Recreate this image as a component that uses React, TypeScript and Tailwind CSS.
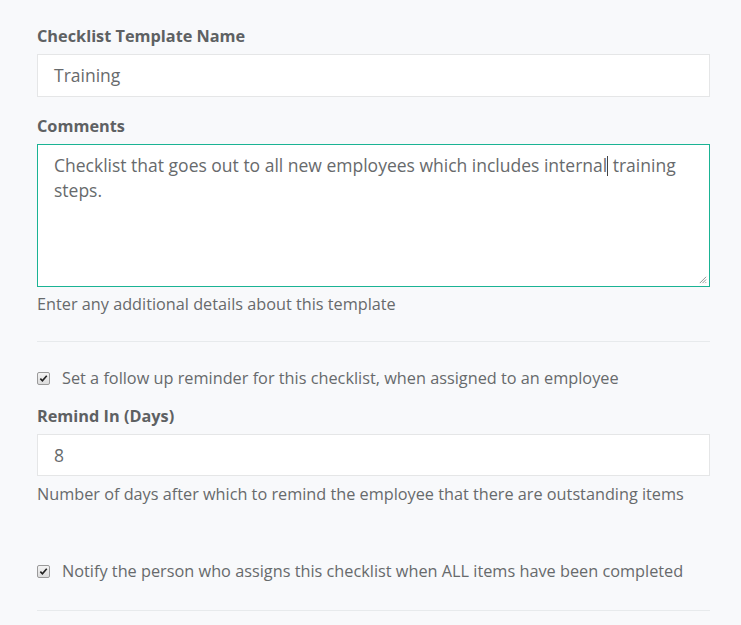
function Check({ label }: { label: string }) {
  return (
    <label className="flex h-5 items-center gap-3">
      <span className="flex h-[13px] w-[13px] items-center justify-center rounded-[2px] border border-[#9a9a9a] bg-gradient-to-b from-[#f4f4f4] to-[#dcdcdc]">
        <svg viewBox="0 0 10 10" className="h-[9px] w-[9px]">
          <path d="M1.5 5.2 L3.8 7.6 L8.6 2" fill="none" stroke="#222" strokeWidth="1.8" />
        </svg>
      </span>
      <span className="text-[16.3px] text-[#676a6c]">{label}</span>
    </label>
  );
}

export default function App() {
  return (
    <div className="min-h-[625px] bg-[#f8f9fb] px-[37px] font-['Open_Sans',sans-serif] text-[#676a6c]">
      <div className="w-[673px] pt-[26px]">
        <div className="text-[16.3px] font-bold leading-5 text-[#5e6163]">Checklist Template Name</div>
        <div className="mt-2 flex h-[43px] items-center border border-[#e5e6e7] bg-white px-4 text-[17.5px]">
          Training
        </div>

        <div className="mt-[19px] text-[16.3px] font-bold leading-5 text-[#5e6163]">Comments</div>
        <div className="relative mt-2 h-[143px] border border-[#1ab394] bg-white px-4 pt-2 text-[17.5px] leading-[25px]">
          Checklist that goes out to all new employees which includes internal
          <span className="inline-block h-[20px] w-px bg-[#444] align-[-4px]" /> training steps.
          <svg viewBox="0 0 10 10" className="absolute bottom-[2px] right-[2px] h-[9px] w-[9px]">
            <path d="M9 2 L2 9 M9 5 L5 9 M9 8 L8 9" stroke="#888" strokeWidth="1" />
          </svg>
        </div>
        <div className="mt-[7px] text-[16.25px] leading-5">Enter any additional details about this template</div>

        <div className="mt-[27px] h-px bg-[#e7eaec]" />

        <div className="mt-[26px]">
          <Check label="Set a follow up reminder for this checklist, when assigned to an employee" />
        </div>

        <div className="mt-[18px] text-[16.3px] font-bold leading-5 text-[#5e6163]">Remind In (Days)</div>
        <div className="mt-2 flex h-[42px] items-center border border-[#e5e6e7] bg-white px-4 text-[17.5px]">
          8
        </div>
        <div className="mt-2 text-[16.25px] leading-5">
          Number of days after which to remind the employee that there are outstanding items
        </div>

        <div className="mt-[57px]">
          <Check label="Notify the person who assigns this checklist when ALL items have been completed" />
        </div>

        <div className="mt-[29px] h-px bg-[#e7eaec]" />
      </div>
    </div>
  );
}
